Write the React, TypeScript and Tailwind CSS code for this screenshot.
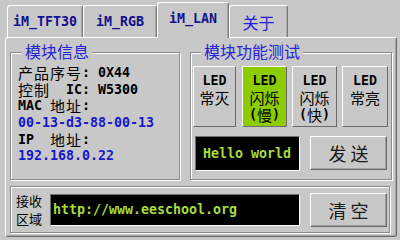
const MF = "font-['DejaVu_Sans_Mono',monospace] font-bold text-[13.3px]";
const CF = "font-['Noto_Sans_CJK_SC',sans-serif]";
const M = `${MF} inline-block leading-[16px]`;
const C = `${CF} text-[15px] inline-block leading-[16px]`;

const Tab = ({
  label,
  cjk,
  active,
  width,
}: {
  label: string;
  cjk?: boolean;
  active?: boolean;
  width: string;
}) => (
  <div
    className={`${width} ${
      active ? "h-[36px] -mb-px relative z-10 pb-[3px]" : "h-[32px]"
    } flex items-center justify-center bg-[#c8c8c8] border-t border-l border-r border-t-white border-l-white border-r-[#7a7a7a] rounded-t-[3px] shadow-[inset_-1px_0_0_#a8a8a8]`}
  >
    {cjk ? (
      <span className={`${CF} text-[16px] leading-[20px] text-[#2020d8]`}>{label}</span>
    ) : (
      <span className={`${MF} leading-[16px] text-[#12128e]`}>{label}</span>
    )}
  </div>
);

const LedButton = ({
  lines,
  width,
  on,
}: {
  lines: React.ReactNode[];
  width: string;
  on?: boolean;
}) => (
  <div
    className={`${width} h-[61px] flex flex-col items-center pt-[6px] gap-[1px] border border-t-white border-l-white border-r-[#6a6a6a] border-b-[#6a6a6a] ${
      on ? "bg-[#8ccc00]" : "bg-[#c8c8c8]"
    }`}
  >
    {lines.map((l, i) => (
      <div key={i} className="h-[16px] flex text-black">
        {l}
      </div>
    ))}
  </div>
);

const BigButton = ({ label }: { label: string }) => (
  <div className="w-[77px] h-[34px] flex items-center justify-center border border-t-white border-l-white border-r-[#6a6a6a] border-b-[#6a6a6a] shadow-[inset_-1px_-1px_0_#a0a0a0]">
    <span className={`${CF} text-[18px] leading-[22px] text-[#1a1a1a] whitespace-pre`}>{label}</span>
  </div>
);

export default function App() {
  return (
    <div className="w-[400px] h-[240px] bg-[#c8c8c8] overflow-hidden select-none">
      {/* tab header */}
      <div className="flex items-end pl-[7px] h-[37px]">
        <Tab label="iM_TFT30" width="w-[76px]" />
        <Tab label="iM_RGB" width="w-[74px]" />
        <Tab label="iM_LAN" width="w-[72px]" active />
        <Tab label="关于" width="w-[59px]" cjk />
      </div>

      {/* tab pane */}
      <div className="ml-[5px] w-[392px] h-[200px] border border-t-white border-l-white border-r-[#6a6a6a] border-b-[#6a6a6a] rounded-[3px] shadow-[inset_-1px_-1px_0_#a8a8a8] pl-[4px] pt-[14px]">
        <div className="flex gap-[10px]">
          {/* 模块信息 */}
          <div className="relative w-[170px] h-[128px] border border-[#8a8a8a] shadow-[inset_1px_1px_0_#fff,1px_1px_0_#fff] pl-[7px] pt-[12px]">
            <span
              className={`${CF} text-[16px] leading-[20px] text-[#2424d8] absolute left-[11px] top-[-12px] px-[3px] bg-[#c8c8c8]`}
            >
              模块信息
            </span>
            <div className="flex items-center h-[16.6px]">
              <span className={`${C} w-[64px] tracking-[1px]`}>产品序号</span>
              <span className={`${M} w-[16px]`}>:</span>
              <span className={M}>0X44</span>
            </div>
            <div className="flex items-center h-[16.6px]">
              <span className={`${C} w-[48px] tracking-[1px]`}>控制</span>
              <span className={`${M} w-[16px]`}>IC</span>
              <span className={`${M} w-[16px]`}>:</span>
              <span className={M}>W5300</span>
            </div>
            <div className="flex items-center h-[16.6px]">
              <span className={`${M} w-[32px]`}>MAC</span>
              <span className={`${C} w-[32px] tracking-[1px]`}>地址</span>
              <span className={M}>:</span>
            </div>
            <div className="flex items-center h-[16.6px]">
              <span className={`${M} text-[#1818c8]`}>00-13-d3-88-00-13</span>
            </div>
            <div className="flex items-center h-[16.6px]">
              <span className={`${M} w-[32px]`}>IP</span>
              <span className={`${C} w-[32px] tracking-[1px]`}>地址</span>
              <span className={M}>:</span>
            </div>
            <div className="flex items-center h-[16.6px]">
              <span className={`${M} text-[#1818c8]`}>192.168.0.22</span>
            </div>
          </div>

          {/* 模块功能测试 */}
          <div className="relative w-[202px] h-[128px] border border-[#8a8a8a] shadow-[inset_1px_1px_0_#fff,1px_1px_0_#fff] pl-[2px] pt-[13px]">
            <span
              className={`${CF} text-[16px] leading-[20px] text-[#2424d8] absolute left-[10px] top-[-12px] px-[3px] bg-[#c8c8c8]`}
            >
              模块功能测试
            </span>
            <div className="flex">
              <LedButton
                width="w-[43px]"
                lines={[<span className={M}>LED</span>, <span className={C}>常灭</span>]}
              />
              <div className="w-[6px]" />
              <LedButton
                width="w-[45px]"
                on
                lines={[
                  <span className={M}>LED</span>,
                  <span className={C}>闪烁</span>,
                  <>
                    <span className={M}>(</span>
                    <span className={C}>慢</span>
                    <span className={M}>)</span>
                  </>,
                ]}
              />
              <div className="w-[5px]" />
              <LedButton
                width="w-[45px]"
                lines={[
                  <span className={M}>LED</span>,
                  <span className={C}>闪烁</span>,
                  <>
                    <span className={M}>(</span>
                    <span className={C}>快</span>
                    <span className={M}>)</span>
                  </>,
                ]}
              />
              <div className="w-[5px]" />
              <LedButton
                width="w-[46px]"
                lines={[<span className={M}>LED</span>, <span className={C}>常亮</span>]}
              />
            </div>
            <div className="flex items-start mt-[9px] pl-[2px] gap-[10px]">
              <div className="w-[105px] h-[35px] bg-black border border-t-[#707070] border-l-[#707070] border-r-white border-b-white flex items-center pl-[7px]">
                <span className={`${M} text-[#a4dc3c]`}>Hello world</span>
              </div>
              <BigButton label="发 送" />
            </div>
          </div>
        </div>

        {/* 接收区域 */}
        <div className="mt-[6px] w-[380px] h-[47px] border border-[#8a8a8a] shadow-[inset_1px_1px_0_#fff,1px_1px_0_#fff] flex items-center pl-[5px]">
          <div className={`${CF} text-[13px] leading-[18px] w-[28px] whitespace-nowrap text-black`}>
            <div>接收</div>
            <div>区域</div>
          </div>
          <div className="ml-[6px] w-[250px] h-[32px] bg-black border border-t-[#707070] border-l-[#707070] border-r-white border-b-white flex items-center pl-[2px]">
            <span className={`${M} text-[#a4dc3c]`}>http://www.eeschool.org</span>
          </div>
          <div className="ml-[10px]">
            <BigButton label="清 空" />
          </div>
        </div>
      </div>
    </div>
  );
}
